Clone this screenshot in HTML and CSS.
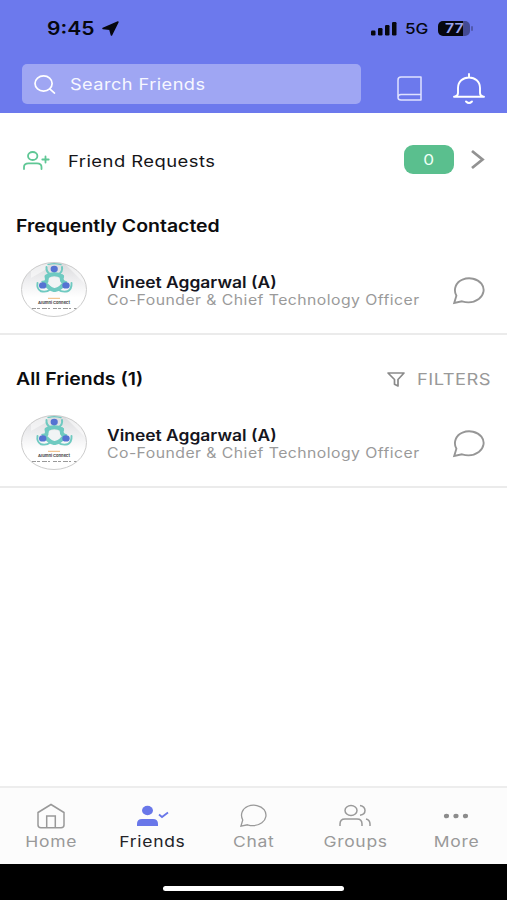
FILE: index.html
```html
<!DOCTYPE html>
<html lang="en">
<head>
<meta charset="utf-8">
<meta name="viewport" content="width=device-width, initial-scale=1">
<title>Friends</title>
<link rel="stylesheet" href="styles.css">
</head>
<body>
<svg class="defs" aria-hidden="true">
  <defs>
    <linearGradient id="shade" x1="0" y1="0" x2="0" y2="1">
      <stop offset="0" stop-color="#d9dadc"/>
      <stop offset=".3" stop-color="#ececee"/>
      <stop offset=".65" stop-color="#fff"/>
    </linearGradient>
    <clipPath id="oval"><ellipse cx="33" cy="27.500" rx="32.500" ry="27"/></clipPath>
    <symbol id="bubble" viewBox="0 0 34 28">
      <path d="M2.200 26 4.400 18.700C1 12.500 3.800 5.200 10.500 2.600c6.800-2.700 15-1 18.900 4 3.800 4.900 2.600 11.600-2.600 15.400-4.600 3.300-11.500 4-16.800 2.300Z"/>
    </symbol>
    <symbol id="avatar" viewBox="0 0 66 55">
      <ellipse cx="33" cy="27.500" rx="32.500" ry="27" fill="url(#shade)"/>
      <g clip-path="url(#oval)">
        <path d="M10 16 24 8 30 1H10ZM44 2 66 24V8Z" fill="#fff" opacity=".5"/>
        <g fill="none" stroke="#6fcac1" stroke-linecap="round">
          <path d="M27 2.500Q33 .8 40 2.500" stroke-width="1.300"/>
          <path d="M25.500 5Q25 10 29.500 12.500M41 5Q42 10 37 12.500" stroke-width="2"/>
          <path d="M26 14.500Q33 9.800 41 14.500" stroke-width="4.200"/>
          <path d="M25.500 14.500Q27 20 23.500 20.500Q28 27 33 28M41 14.500Q39.500 19 43.500 20.500Q40 27 34 28" stroke-width="4"/>
          <path d="M16.500 21Q15.500 27 20 29.300Q26 30.500 29 27.500M50.500 21Q51 27 46.500 29.300Q41 30.500 37 27.500" stroke-width="1.900"/>
        </g>
        <path d="M28 16.500Q33 14 38.500 16.500Q40 20 37 24Q33 26 30 24Q26.500 20 28 16.500Z" fill="#f1f4f5"/>
        <g fill="#5573d2"><ellipse cx="33.200" cy="7" rx="3.600" ry="3.200"/><ellipse cx="21.700" cy="23.400" rx="3.700" ry="3.200"/><ellipse cx="45" cy="23.400" rx="3.700" ry="3.200"/></g>
        <path d="M27 36.300H39" stroke="#efb777" stroke-width="1"/>
        <text x="17" y="42" textLength="32" lengthAdjust="spacingAndGlyphs" class="avatar-name">Alumni Connect</text>
        <path d="M11 46.500H56" stroke="#999" stroke-width="1" stroke-dasharray="4 1 3 2 5 1 2 3"/>
      </g>
      <ellipse cx="33" cy="27.500" rx="32.500" ry="27" fill="none" stroke="#ccc"/>
    </symbol>
  </defs>
</svg>
<div class="screen">
  <header class="top">
    <div class="status">
      <span class="time"><b class="tx">9:45</b></span>
      <svg class="arrow" viewBox="0 0 18 16"><path d="M17 1 10 15 8.300 8.800 1 8Z" fill="#06070f" stroke="#06070f" stroke-width="1.600" stroke-linejoin="round"/></svg>
      <svg class="signal" viewBox="0 0 26 14" fill="#06070f"><rect y="8.500" width="4.500" height="5" rx="1.200"/><rect x="7" y="6" width="4.500" height="7.500" rx="1.200"/><rect x="14" y="3" width="4.500" height="10.500" rx="1.200"/><rect x="21" y="0" width="4.500" height="13.500" rx="1.200"/></svg>
      <span class="net"><span class="tx">5G</span></span>
      <span class="battery"><b class="tx">77</b></span>
      <i class="battery-tip"></i>
    </div>
    <div class="tools">
      <div class="search">
        <svg class="lens" viewBox="0 0 23 20" fill="none" stroke="#fff" stroke-width="1.800" stroke-linecap="round"><ellipse cx="10" cy="9" rx="9" ry="8"/><path d="m16.500 14.700 5 4.300"/></svg>
        <span class="tx">Search Friends</span>
      </div>
      <svg class="book" viewBox="0 0 25 25" fill="none" stroke="#dfe2ff" stroke-width="1.500" stroke-linejoin="round"><path d="M24 18.500V1H4Q1 1 1 4V21.500Q1 24 4 24H24V18.500H4Q1 18.500 1 21.500"/></svg>
      <svg class="bell" viewBox="0 0 32 32" fill="none" stroke="#fff" stroke-width="1.900" stroke-linecap="round" stroke-linejoin="round"><path d="M16 1V4.500M1 23.700H31M1.500 23.700Q5 23 5 20V15C5 8.500 10 4.500 16 4.500S27 8.500 27 15V20Q27 23 30.500 23.700"/><path d="M13 28.500Q16 31.500 19 28.500"/></svg>
    </div>
  </header>
  <main class="content">
    <section class="requests">
      <svg class="add" viewBox="0 0 27 19" fill="none" stroke="#5fc795" stroke-width="1.800" stroke-linecap="round"><ellipse cx="9.700" cy="5" rx="4.700" ry="4"/><path d="M1 18V16Q1 12.300 5.500 12.300H14Q18.500 12.300 18.500 16V18M22.500 5.500V11.500M19.300 8.500H25.700"/></svg>
      <span class="req-label"><span class="tx">Friend Requests</span></span>
      <span class="badge"><span class="tx">0</span></span>
      <svg class="chev" viewBox="0 0 14 19" fill="none" stroke="#929292" stroke-width="2.800"><path d="M1 1 11.500 9.500 1 18"/></svg>
    </section>
    <div class="heading"><b class="tx">Frequently Contacted</b></div>
    <section class="friend">
      <svg class="avatar"><use href="#avatar"/></svg>
      <div class="info"><div class="name"><b class="tx">Vineet Aggarwal (A)</b></div><div class="role"><span class="tx">Co-Founder &amp; Chief Technology Officer</span></div></div>
      <svg class="talk"><use href="#bubble"/></svg>
    </section>
    <div class="heading all"><b class="tx">All Friends (1)</b>
      <svg class="funnel" viewBox="0 0 18 15" fill="none" stroke="#8a8a8a" stroke-width="1.700" stroke-linejoin="round"><path d="M1 1H17L11 7.500V14L7.500 12.300V7.500Z"/></svg>
      <span class="filters"><span class="tx">FILTERS</span></span>
    </div>
    <section class="friend">
      <svg class="avatar"><use href="#avatar"/></svg>
      <div class="info"><div class="name"><b class="tx">Vineet Aggarwal (A)</b></div><div class="role"><span class="tx">Co-Founder &amp; Chief Technology Officer</span></div></div>
      <svg class="talk"><use href="#bubble"/></svg>
    </section>
  </main>
  <nav class="tabs">
    <div class="tab"><svg viewBox="0 0 32 26"><path d="M3 9.500 16 1.500 29 9.500V22Q29 24.700 26 24.700H6Q3 24.700 3 22ZM11.700 24.700V13H20.300V24.700"/></svg><span class="tx">Home</span></div>
    <div class="tab active"><svg viewBox="0 0 32 26"><g fill="#6977e9" stroke="none"><ellipse cx="11.500" cy="7.500" rx="5.500" ry="4.700"/><path d="M1 23V21Q1 16 6 16H17Q22 16 22 21V23Z"/></g><path d="m23 11.500 3 2.500 6-4.500" stroke="#6977e9" stroke-width="1.800"/></svg><span class="tx">Friends</span></div>
    <div class="tab"><svg class="chat" viewBox="0 0 34 28"><use href="#bubble"/></svg><span class="tx">Chat</span></div>
    <div class="tab"><svg viewBox="0 0 32 26"><ellipse cx="12" cy="7.500" rx="6" ry="5"/><path d="M1 23V21Q1 16 6 16H18Q23 16 23 21V23M21 2.500Q26 3.500 26 7.500T21 12.300M27 16Q31 17 31 21V23"/></svg><span class="tx">Groups</span></div>
    <div class="tab"><svg viewBox="0 0 32 26"><g fill="#8c8c8c" stroke="none"><ellipse cx="6.500" cy="13" rx="2.600" ry="2.300"/><ellipse cx="16" cy="13" rx="2.600" ry="2.300"/><ellipse cx="25.500" cy="13" rx="2.600" ry="2.300"/></g></svg><span class="tx">More</span></div>
  </nav>
  <footer class="home-area"><i class="indicator"></i></footer>
</div>
</body>
</html>
```
FILE: styles.css
```css
* { box-sizing: border-box; }
body { margin: 0; background: #fff; font-family: Inter, "Liberation Sans", sans-serif; color: #151518; }
svg { display: block; flex: none; overflow: visible; }
.defs { position: absolute; width: 0; height: 0; }
.tx { display: inline-block; white-space: nowrap; transform: scaleX(1.145); transform-origin: left center; }
b { font-weight: 600; }
.screen { width: 507px; height: 900px; display: flex; flex-direction: column; overflow: hidden; }
.top { height: 113px; background: #6c79ed; flex: none; }
.status { height: 56px; padding: 1px 0 0 47px; display: flex; align-items: center; color: #06070f; }
.time { width: 55px; font-size: 18px; }
.time .tx { transform: scaleX(1.17); }
.arrow { width: 17px; height: 15px; }
.signal { width: 26px; height: 14px; margin-left: 252px; }
.net { width: 33px; margin-left: 8px; font-size: 15px; font-weight: 500; }
.battery { width: 32px; height: 15px; border-radius: 5px; background: linear-gradient(90deg, #06070f 79%, #434a94 79%); color: #9aa3f0; font-size: 13px; line-height: 15px; padding-left: 7px; }
.battery .tx { transform: scaleX(1.22); }
.battery-tip { width: 2px; height: 5px; margin-left: 1px; border-radius: 2px; background: #5059ae; }
.tools { display: flex; padding: 8px 22px 0; align-items: flex-start; }
.search { width: 339px; height: 40px; border-radius: 5px; background: #9fa6f3; display: flex; align-items: center; padding-left: 12px; color: #f6f7ff; font-size: 16px; letter-spacing: .4px; gap: 14px; }
.search .tx { transform: scaleX(1.135); }
.lens { width: 22px; height: 19px; }
.book { width: 25px; height: 25px; margin: 12px 0 0 36px; }
.bell { width: 32px; height: 32px; margin: 9px 0 0 31px; }
.content { flex: 1; min-height: 0; }
.requests { height: 94px; display: flex; align-items: center; padding-left: 23px; }
.add { width: 27px; height: 19px; margin-top: 1px; }
.req-label { width: 337px; margin: 2px 0 0 17.500px; font-size: 16px; letter-spacing: .4px; }
.req-label .tx { transform: scaleX(1.15); }
.badge { width: 50px; height: 29px; margin: -2px 0 0 -.5px; border-radius: 9px; background: #5abf8e; color: #effff6; text-align: center; font-size: 15px; line-height: 29px; }
.badge .tx { transform-origin: center; }
.chev { width: 14px; height: 19px; margin: -2px 0 0 17px; }
.heading { height: 38px; padding: 0 16px; display: flex; align-items: center; font-size: 17px; color: #0c0c0e; }
.friend { height: 90px; display: flex; align-items: center; padding-left: 21px; border-bottom: 2px solid #ebebeb; }
.all { margin-top: 25px; }
.avatar { width: 66px; height: 55px; }
.avatar-name { font: 700 4px Inter, sans-serif; fill: #444; }
.info { width: 345px; margin-left: 20px; padding-top: 2px; }
.name { font-size: 15.500px; line-height: 18px; color: #151520; }
.name .tx { position: relative; top: 1px; transform: scaleX(1.125); }
.role { font-size: 14px; line-height: 17px; letter-spacing: .4px; color: #9a9a9a; }
.role .tx { transform: scaleX(1.128); }
.talk { width: 34px; height: 28px; margin-top: 3px; fill: none; stroke: #969696; stroke-width: 1.900; }
.funnel { width: 18px; height: 15px; margin-left: auto; }
.filters { width: 74px; margin-left: 12px; color: #999; font-size: 16px; letter-spacing: .4px; }
.tabs { height: 78px; flex: none; display: flex; border-top: 2px solid #ededed; background: #fcfcfc; color: #999; }
.tab { width: 101.400px; display: flex; flex-direction: column; align-items: center; padding-top: 15px; font-size: 15px; letter-spacing: .6px; }
.tab svg { width: 32px; height: 26px; fill: none; stroke: #999; stroke-width: 1.500; }
.tab .chat { width: 29px; height: 24px; margin: 1px 0; }
.active { color: #242428; }
.tab .tx { transform: scaleX(1.165); transform-origin: center; line-height: 18px; margin: 4px 0 0 1px; }
.home-area { height: 36px; flex: none; background: #000; display: flex; justify-content: center; align-items: flex-end; padding-bottom: 9px; }
.indicator { width: 181px; height: 5px; border-radius: 3px; background: #fff; }
```
